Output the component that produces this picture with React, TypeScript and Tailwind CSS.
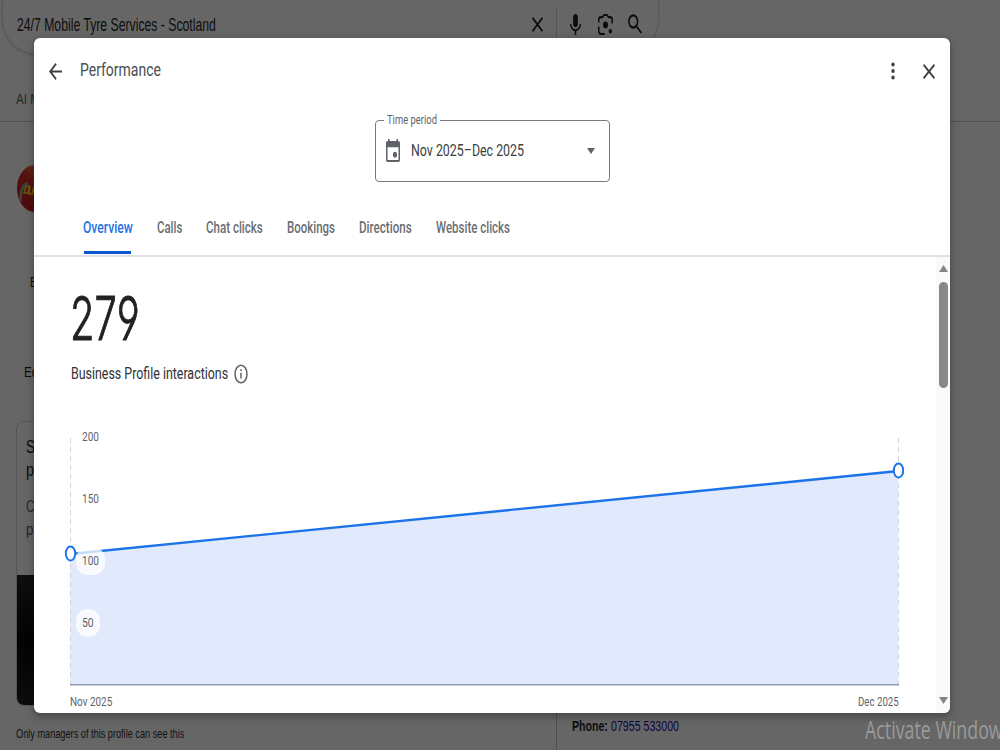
import React, { useLayoutEffect, useRef, useState } from "react";

type LabelProps = {
  children: string;
  width: number;
  className?: string;
};

// Single line of text condensed to the given width
const Label = ({ children, width, className = "" }: LabelProps) => {
  const ref = useRef<HTMLSpanElement>(null);
  const [scale, setScale] = useState(1);

  useLayoutEffect(() => {
    if (ref.current) setScale(width / ref.current.offsetWidth);
  }, [width, children]);

  return (
    <div className={`shrink-0 whitespace-nowrap ${className}`} style={{ width }}>
      <span
        ref={ref}
        className="inline-block origin-left"
        style={{ transform: `scaleX(${scale})` }}
      >
        {children}
      </span>
    </div>
  );
};

const tabs = [
  { name: "Overview", width: 50 },
  { name: "Calls", width: 25 },
  { name: "Chat clicks", width: 57 },
  { name: "Bookings", width: 48 },
  { name: "Directions", width: 53 },
  { name: "Website clicks", width: 74 },
];

const CloseIcon = ({ className }: { className: string }) => (
  <svg viewBox="5 5 14 14" preserveAspectRatio="none" className={className} fill="currentColor">
    <path d="M19 6.41 17.59 5 12 10.59 6.41 5 5 6.41 10.59 12 5 17.59 6.41 19 12 13.41 17.59 19 19 17.59 13.41 12z" />
  </svg>
);

const SearchPage = () => (
  <div className="w-full h-full flex flex-col bg-white text-[#1f1f1f] font-['Liberation_Sans',sans-serif]">
    <div className="w-[657px] h-[55px] ml-[2px] shrink-0 flex items-start rounded-b-[36px] border border-t-0 border-[#d8dadf] shadow-sm">
      <Label width={199} className="ml-[14px] mt-[12px] text-[18px] leading-[27px]">
        24/7 Mobile Tyre Services - Scotland
      </Label>
      <CloseIcon className="w-[11px] h-[15px] ml-[316px] mt-[17px]" />
      <div className="w-px h-[34px] ml-[13px] mt-[7px] bg-[#d0d0d0]" />
      <svg viewBox="5 2 14 20" preserveAspectRatio="none" className="w-[11px] h-[21px] ml-[13px] mt-[14px]" fill="currentColor">
        <path d="M12 14.500c1.660 0 3-1.340 3-3V5c0-1.660-1.340-3-3-3S9 3.340 9 5v6.500c0 1.660 1.340 3 3 3z" />
        <path d="M17.300 11.500c0 2.900-2.400 5-5.300 5s-5.300-2.100-5.300-5H5c0 3.400 2.720 6.230 6 6.700V22h2v-3.800c3.280-.470 6-3.300 6-6.700z" />
      </svg>
      <svg viewBox="0 0 20 20" preserveAspectRatio="none" className="w-[15px] h-[21px] ml-[17px] mt-[14px]">
        <path
          d="M1 8V6q0-3 3-3h2l2-2h4l2 2h2q3 0 3 3v3M1 12v4q0 3 3 3h5"
          fill="none"
          stroke="currentColor"
          strokeWidth="2"
        />
        <circle cx="10" cy="10.500" r="3.300" fill="currentColor" />
        <circle cx="16.500" cy="16.500" r="2.100" fill="currentColor" />
      </svg>
      <svg viewBox="0 0 20 20" preserveAspectRatio="none" className="w-[14px] h-[20px] ml-[15px] mt-[14px]" fill="none" stroke="currentColor" strokeWidth="2.200">
        <circle cx="7.500" cy="7.500" r="6.200" />
        <path d="m12 12 7 7" />
      </svg>
    </div>
    <div className="h-[67px] shrink-0 flex items-end pl-4 pb-[11px] border-b border-[#cfcfcf] text-[#5f6368]">
      <Label width={24} className="text-[15px]">
        AI M
      </Label>
    </div>
    <div className="flex-1 flex">
      <div className="w-[557px] flex flex-col border-r border-[#c8c8c8]">
        <div className="w-[35px] h-[47px] ml-[17px] mt-[43px] rounded-[50%] bg-linear-to-tr from-[#b81020] via-[#d62d28] to-[#f3ad3c] flex items-center overflow-hidden">
          <svg viewBox="0 0 35 47" className="w-full h-full">
            <path d="M2 36C2 23 5 18 11 17v3c-5 2-6 9-6 17z" fill="#999" />
            <path d="M7 29l2-8h3l-1 7H7M13 21l-1 8h3l2-8M18 19l-1 9" fill="none" stroke="#ffdb00" strokeWidth="1.500" />
          </svg>
        </div>
        <Label width={7} className="ml-[30px] mt-[59px] text-[15px] leading-[22px]">
          E
        </Label>
        <Label width={14} className="ml-[24px] mt-[68px] text-[15px] leading-[22px]">
          Ed
        </Label>
        <div className="w-[300px] h-[285px] ml-[16px] mt-[38px] flex flex-col border border-[#d2d4d8] rounded-[8px] overflow-hidden">
          <div className="pl-[9px] pt-[14px]">
            <Label width={9} className="text-[18px] leading-[23px]">
              S
            </Label>
            <Label width={8} className="text-[18px] leading-[23px]">
              p
            </Label>
            <Label width={9} className="mt-[13px] text-[16px] leading-[23px] text-[#5f6368]">
              C
            </Label>
            <Label width={10} className="text-[16px] leading-[23px] text-[#5f6368]">
              pl
            </Label>
          </div>
          <div className="mt-auto h-[130px] bg-linear-to-b from-[#242628] via-[#090909] to-[#202020]" />
        </div>
        <Label width={168} className="ml-4 mt-[18px] text-[13px] leading-[20px] text-[#303134]">
          Only managers of this profile can see this
        </Label>
      </div>
      <div className="flex items-end gap-[3px] pl-[15px] pb-[14px] text-[15px] leading-[20px]">
        <Label width={36} className="font-bold">
          Phone:
        </Label>
        <Label width={68} className="text-[#1a0dab]">
          07955 533000
        </Label>
      </div>
    </div>
  </div>
);

const Header = () => (
  <div className="h-[62px] flex items-center px-[15px] text-[#3c4043]">
    <svg viewBox="4 4 16 16" preserveAspectRatio="none" className="w-[13px] h-[17px] mt-[5px]" fill="currentColor">
      <path d="M20 11H7.830l5.590-5.590L12 4l-8 8 8 8 1.410-1.410L7.830 13H20v-2z" />
    </svg>
    <Label width={81} className="ml-[18px] mt-[2px] text-[19px] text-[#4a4d51]">
      Performance
    </Label>
    <svg viewBox="0 0 4 18" className="w-[4px] h-[18px] ml-auto mr-[28px] mt-[4px]" fill="currentColor">
      <ellipse cx="2" cy="2.600" rx="1.700" ry="2" />
      <ellipse cx="2" cy="9" rx="1.700" ry="2" />
      <ellipse cx="2" cy="15.400" rx="1.700" ry="2" />
    </svg>
    <CloseIcon className="w-[12px] h-[15px] mt-[5px]" />
  </div>
);

const PeriodPicker = () => (
  <div className="relative w-[235px] h-[62px] ml-[341px] mt-[20px] flex items-center border border-[#747a80] rounded-[4px] text-[#5f6368]">
    <div className="absolute -top-[10px] left-[8px] px-[3px] bg-white">
      <Label width={50} className="text-[13px] leading-[18px]">
        Time period
      </Label>
    </div>
    <svg viewBox="0 0 14 22" preserveAspectRatio="none" className="w-[14px] h-[23px] ml-[10px] mb-[2px]" fill="currentColor">
      <path
        fillRule="evenodd"
        d="M2 0h1.500v2h7V0H12v2h.500Q14 2 14 4v16q0 2-1.500 2h-11Q0 22 0 20V4q0-2 1.500-2H2zM1.500 8v12h11V8z"
      />
      <ellipse cx="9" cy="15" rx="2" ry="2.800" />
    </svg>
    <Label width={113} className="ml-[11px] text-[17px] text-[#3c4043]">
      Nov 2025–Dec 2025
    </Label>
    <svg viewBox="0 0 8 6" className="w-[8px] h-[6px] ml-auto mr-[14px]" fill="currentColor">
      <path d="M0 0h8L4 6z" />
    </svg>
  </div>
);

const Tabs = () => (
  <div className="h-[55px] mt-[20px] pl-[49px] flex gap-[24px] border-b-2 border-[#dfe1e5] text-[16px] font-medium text-[#6a6e73]">
    {tabs.map((tab, i) => (
      <div key={tab.name} className="flex flex-col justify-between pt-[14px]">
        <Label width={tab.width} className={i === 0 ? "text-[#1a73e8]" : ""}>
          {tab.name}
        </Label>
        {i === 0 && <div className="h-[3px] ml-px mr-[2px] mb-px bg-[#0b57d0]" />}
      </div>
    ))}
  </div>
);

const Chart = () => (
  <div className="relative w-[840px] h-[260px] ml-[30px] mt-[41px] text-[13px] leading-[16px] text-[#5f6368]">
    <svg viewBox="0 0 840 260" className="block w-full h-full">
      <path d="M6.500 128 834.500 45V259H6.500z" fill="#e1eafc" />
      <path d="M6.500 12V259M834.500 12V259" stroke="#d2d6db" strokeDasharray="5 4" />
      <path d="M6 258.700H835" stroke="#8f9bb3" strokeWidth="1.600" />
      <path d="M6.500 128 834.500 45" stroke="#1a73e8" strokeWidth="2.400" />
      <ellipse cx="6.500" cy="127.500" rx="4.700" ry="7" fill="#fff" stroke="#1a73e8" strokeWidth="1.900" />
      <ellipse cx="834.500" cy="44.500" rx="4.700" ry="7" fill="#fff" stroke="#1a73e8" strokeWidth="1.900" />
    </svg>
    <div className="absolute left-[12px] top-[-3px] flex flex-col items-start gap-[34px]">
      <div className="h-[28px] px-[6px] flex items-center">
        <Label width={17}>200</Label>
      </div>
      <div className="h-[28px] px-[6px] flex items-center">
        <Label width={17}>150</Label>
      </div>
      <div className="h-[28px] px-[6px] flex items-center rounded-[12px] bg-white/75">
        <Label width={17}>100</Label>
      </div>
      <div className="h-[28px] px-[6px] flex items-center rounded-[12px] bg-white/75">
        <Label width={12}>50</Label>
      </div>
    </div>
  </div>
);

const Scrollbar = () => (
  <div className="w-[14px] flex flex-col items-center pt-[8px] pb-[9px] bg-[#fafafa] text-[#858585]">
    <svg viewBox="0 0 9 7" className="w-[9px] h-[7px]" fill="currentColor">
      <path d="M0 7h9L4.500 0z" />
    </svg>
    <div className="w-[9px] h-[106px] mt-[10px] rounded-full bg-[#888]" />
    <svg viewBox="0 0 9 7" className="w-[9px] h-[7px] mt-auto" fill="currentColor">
      <path d="M0 0h9L4.500 7z" />
    </svg>
  </div>
);

const PerformanceModal = () => (
  <div className="absolute left-[34px] top-[38px] w-[916px] h-[675px] flex flex-col bg-white rounded-[6px] overflow-hidden shadow-[0_3px_10px_rgba(0,0,0,0.35)] font-[Roboto,sans-serif]">
    <Header />
    <PeriodPicker />
    <Tabs />
    <div className="flex-1 flex justify-between">
      <div className="flex flex-col">
        <Label
          width={70}
          className="ml-[36px] mt-[29px] text-[61px] leading-[64px] font-light text-[#202124] [font-family:Inter,sans-serif] [font-feature-settings:'ss01'] [-webkit-text-stroke:1px_#202124]"
        >
          279
        </Label>
        <div className="flex items-center mt-[11px] ml-[37px]">
          <Label width={157} className="text-[17px] leading-[24px] text-[#303134]">
            Business Profile interactions
          </Label>
          <svg viewBox="0 0 14 20" className="w-[14px] h-[20px] ml-[6px] mt-[2px]" fill="none" stroke="#5f6368">
            <ellipse cx="7" cy="10" rx="6" ry="8.800" strokeWidth="1.500" />
            <path d="M7 8.800V14.500M7 5.200V7" strokeWidth="1.500" />
          </svg>
        </div>
        <Chart />
        <div className="flex justify-between w-[829px] ml-[36px] mt-[8px] text-[13px] leading-[16px] text-[#5f6368]">
          <Label width={42}>Nov 2025</Label>
          <Label width={41}>Dec 2025</Label>
        </div>
      </div>
      <Scrollbar />
    </div>
  </div>
);

const App = () => {
  return (
    <div className="relative w-[1000px] h-[750px] overflow-hidden">
      <SearchPage />
      <div className="absolute inset-0 bg-black/60" />
      <PerformanceModal />
      <div className="absolute left-[865px] top-[712px] text-[25px] leading-[34px] text-[#9a9a9a] font-['Open_Sans',sans-serif]">
        <Label width={146}>Activate Windows</Label>
      </div>
    </div>
  );
};

export default App;
